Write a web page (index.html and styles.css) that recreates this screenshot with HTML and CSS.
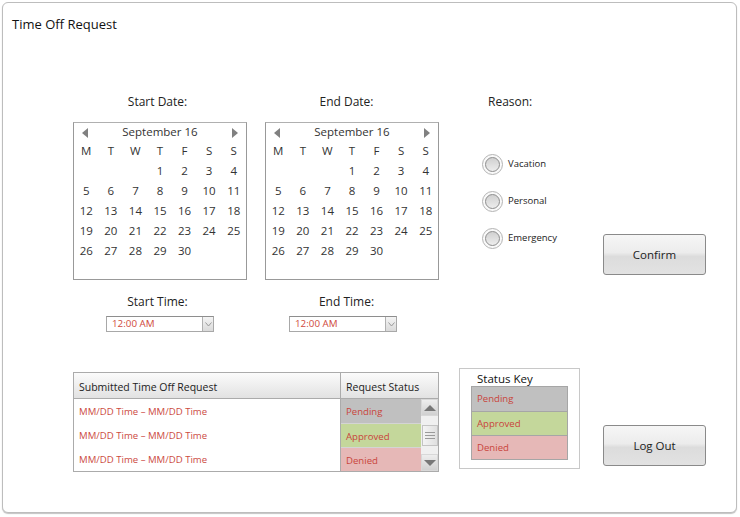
FILE: index.html
```html
<!DOCTYPE html>
<html>
<head>
<meta charset="utf-8">
<title>Time Off Request</title>
<link rel="stylesheet" href="styles.css">
</head>
<body>
<div class="window">
  <div class="title">Time Off Request</div>

  <div class="top">
    <div class="datecol c1">
      <div class="label">Start Date:</div>
      <div class="cal">
        <div class="cal-head"><span class="arr left"></span><span class="month">September 16</span><span class="arr right"></span></div>
        <div class="cal-grid">
          <span>M</span><span>T</span><span>W</span><span>T</span><span>F</span><span>S</span><span>S</span>
          <span></span><span></span><span></span><span>1</span><span>2</span><span>3</span><span>4</span>
          <span>5</span><span>6</span><span>7</span><span>8</span><span>9</span><span>10</span><span>11</span>
          <span>12</span><span>13</span><span>14</span><span>15</span><span>16</span><span>17</span><span>18</span>
          <span>19</span><span>20</span><span>21</span><span>22</span><span>23</span><span>24</span><span>25</span>
          <span>26</span><span>27</span><span>28</span><span>29</span><span>30</span>
        </div>
      </div>
      <div class="label time">Start Time:</div>
      <div class="select"><span class="val">12:00 AM</span><span class="drop"><svg width="7" height="5" viewBox="0 0 7 5"><polyline points="0.5,0.5 3.5,4 6.5,0.5" fill="none" stroke="#999" stroke-width="1"/></svg></span></div>
    </div>

    <div class="datecol c2">
      <div class="label">End Date:</div>
      <div class="cal">
        <div class="cal-head"><span class="arr left"></span><span class="month">September 16</span><span class="arr right"></span></div>
        <div class="cal-grid">
          <span>M</span><span>T</span><span>W</span><span>T</span><span>F</span><span>S</span><span>S</span>
          <span></span><span></span><span></span><span>1</span><span>2</span><span>3</span><span>4</span>
          <span>5</span><span>6</span><span>7</span><span>8</span><span>9</span><span>10</span><span>11</span>
          <span>12</span><span>13</span><span>14</span><span>15</span><span>16</span><span>17</span><span>18</span>
          <span>19</span><span>20</span><span>21</span><span>22</span><span>23</span><span>24</span><span>25</span>
          <span>26</span><span>27</span><span>28</span><span>29</span><span>30</span>
        </div>
      </div>
      <div class="label time">End Time:</div>
      <div class="select"><span class="val">12:00 AM</span><span class="drop"><svg width="7" height="5" viewBox="0 0 7 5"><polyline points="0.5,0.5 3.5,4 6.5,0.5" fill="none" stroke="#999" stroke-width="1"/></svg></span></div>
    </div>

    <div class="reason">
      <div class="label rlabel">Reason:</div>
      <div class="radios">
        <div class="radio-row"><span class="radio"></span><span class="rtext">Vacation</span></div>
        <div class="radio-row"><span class="radio"></span><span class="rtext">Personal</span></div>
        <div class="radio-row"><span class="radio"></span><span class="rtext">Emergency</span></div>
      </div>
    </div>

    <div class="btncol">
      <button class="btn confirm">Confirm</button>
    </div>
  </div>

  <div class="bottom">
    <div class="table">
      <div class="thead">
        <div class="th th1">Submitted Time Off Request</div>
        <div class="th th2">Request Status</div>
      </div>
      <div class="tbody">
        <div class="col1">
          <div class="td">MM/DD Time – MM/DD Time</div>
          <div class="td">MM/DD Time – MM/DD Time</div>
          <div class="td">MM/DD Time – MM/DD Time</div>
        </div>
        <div class="col2">
          <div class="st pending">Pending</div>
          <div class="st approved">Approved</div>
          <div class="st denied">Denied</div>
        </div>
        <div class="scroll">
          <div class="sbtn"><span class="tri up"></span></div>
          <div class="strack"><div class="thumb"><i></i><i></i><i></i></div></div>
          <div class="sbtn"><span class="tri down"></span></div>
        </div>
      </div>
    </div>

    <div class="key">
      <div class="key-title">Status Key</div>
      <div class="key-list">
        <div class="kst pending">Pending</div>
        <div class="kst approved">Approved</div>
        <div class="kst denied">Denied</div>
      </div>
    </div>

    <div class="btncol2">
      <button class="btn logout">Log Out</button>
    </div>
  </div>
</div>
</body>
</html>
```

FILE: styles.css
```css
* { box-sizing: border-box; margin: 0; padding: 0; }
body { margin: 0; background: #fff; font-family: "Open Sans", "Noto Sans", sans-serif; color: #222; }

.window {
  margin: 2px;
  width: 735px;
  height: 511px;
  border: 1px solid #bdbdbd;
  border-radius: 6px;
  box-shadow: 0 1px 1px #c4c4c4;
  background: #fff;
}

.title {
  margin-top: 12px;
  padding-left: 9px;
  font-size: 13px;
  line-height: 18px;
  color: #111;
}

/* top section */
.top { display: flex; margin-top: 61px; padding-left: 70px; }
.datecol { width: 174px; display: flex; flex-direction: column; }
.c2 { margin-left: 18px; }

.label { font-size: 12px; line-height: 16px; text-align: center; color: #222; padding-right: 5px; }
.c2 .label { padding-right: 11px; }
.label.time { margin-top: 14px; }

.cal {
  margin-top: 12px;
  height: 158px;
  border: 1px solid #999;
  border-top-color: #b0b0b0;
  color: #333;
  font-size: 11.5px;
}
.cal-head { display: grid; grid-template-columns: repeat(7, 1fr); height: 18px; align-items: center; justify-items: center; }
.cal-head .month { grid-column: 2 / 7; line-height: 18px; }
.arr { width: 0; height: 0; border-top: 5px solid transparent; border-bottom: 5px solid transparent; margin-top: 1px; }
.arr.left { border-right: 6px solid #808080; margin-left: -2px; }
.arr.right { border-left: 6px solid #808080; margin-left: 2px; }
.cal-grid { display: grid; grid-template-columns: repeat(7, 1fr); grid-auto-rows: 20px; line-height: 20px; text-align: center; }

.select {
  margin-top: 6px;
  margin-left: 33px;
  width: 108px;
  height: 16px;
  border: 1px solid #a8a8a8;
  border-top-color: #8e8e8e;
  display: flex;
  background: #fff;
}
.c2 .select { margin-left: 24px; }
.select .val { flex: 1; font-size: 9.8px; line-height: 14px; color: #d04a3c; padding-left: 5px; }
.select .drop {
  width: 11px;
  border-left: 1px solid #b0b0b0;
  background: linear-gradient(#f4f4f4, #dadada);
  display: flex;
  align-items: center;
  justify-content: center;
}

/* reason */
.reason { width: 121px; margin-left: 43px; display: flex; flex-direction: column; }
.label.rlabel { text-align: left; padding-left: 6px; padding-right: 0; }
.radios { margin-top: 44px; display: flex; flex-direction: column; gap: 17px; }
.radio-row { display: flex; align-items: center; height: 20px; gap: 5px; }
.radio {
  width: 21px; height: 21px; border-radius: 50%;
  border: 1px solid #b4b4b4;
  background: #f9f9f9;
  display: flex; align-items: center; justify-content: center;
}
.radio::after {
  content: "";
  width: 13px; height: 13px; border-radius: 50%;
  border: 1px solid #8c8c8c;
  background: linear-gradient(#d0d0d0, #ededed);
}
.rtext { font-size: 9.5px; color: #222; margin-top: -2px; }

.btncol { display: flex; flex-direction: column; }
.btn {
  width: 103px; height: 41px;
  border: 1px solid #8a8a8a;
  border-radius: 3px;
  background: linear-gradient(#f6f6f6 0%, #ececec 45%, #dcdcdc 55%, #e2e2e2 100%);
  font-family: "Open Sans", "Noto Sans", sans-serif;
  font-size: 11.5px;
  color: #222;
}
.btn.confirm { margin-top: 140px; }

/* bottom section */
.bottom { display: flex; margin-top: 36px; padding-left: 70px; }
.table { margin-top: 4px; width: 366px; height: 100px; border: 1px solid #ababab; display: flex; flex-direction: column; }
.thead { display: flex; height: 26px; border-bottom: 1px solid #ababab; background: linear-gradient(#fbfbfb, #e2e2e2); }
.th { font-size: 10.5px; line-height: 25px; padding-top: 2px; color: #222; padding-left: 5px; }
.th1 { width: 267px; border-right: 1px solid #ababab; }
.th2 { flex: 1; }
.tbody { display: flex; flex: 1; }
.col1 { width: 266px; display: flex; flex-direction: column; }
.td { height: 24px; font-size: 9.6px; line-height: 22px; padding-top: 2px; color: #cc4b3f; padding-left: 5px; }
.col2 { width: 81px; border-left: 1px solid #ababab; display: flex; flex-direction: column; }
.st { height: 24px; font-size: 9.6px; line-height: 22px; padding-top: 2px; color: #c9453c; padding-left: 5px; }
.st + .st { border-top: 1px solid #d4d4d4; }
.pending { background: #c0c0c0; }
.approved { background: #c4d79b; }
.denied { background: #e6b8b7; }

.scroll { flex: 1; display: flex; flex-direction: column; background: #f0f0f0; }
.sbtn { height: 17px; background: linear-gradient(#eeeeee, #d0d0d0); border: 1px solid #d8d8d8; display: flex; align-items: center; justify-content: center; }
.tri { width: 0; height: 0; border-left: 6px solid transparent; border-right: 6px solid transparent; }
.tri.up { border-bottom: 6px solid #777; }
.tri.down { border-top: 6px solid #777; }
.strack { flex: 1; display: flex; align-items: center; justify-content: center; }
.thumb {
  width: 16px; height: 21px;
  border: 1px solid #c4c4c4;
  background: linear-gradient(90deg, #f4f4f4, #e0e0e0);
  display: flex; flex-direction: column; align-items: center; justify-content: center; gap: 2px;
}
.thumb i { display: block; width: 10px; height: 1px; background: #9a9a9a; }

.key { margin-left: 20px; width: 121px; height: 101px; border: 1px solid #c8c8c8; padding-top: 2px; }
.key-title { font-size: 11.5px; line-height: 16px; padding-left: 17px; color: #111; }
.key-list { margin-left: 11px; margin-top: -1px; width: 97px; border: 1px solid #a6a6a6; }
.kst { height: 24px; font-size: 9.6px; line-height: 22px; padding-top: 1px; color: #c9453c; padding-left: 5px; }
.kst + .kst { border-top: 1px solid #a6a6a6; }

.btncol2 { display: flex; flex-direction: column; margin-left: 23px; }
.btn.logout { margin-top: 57px; }
```
